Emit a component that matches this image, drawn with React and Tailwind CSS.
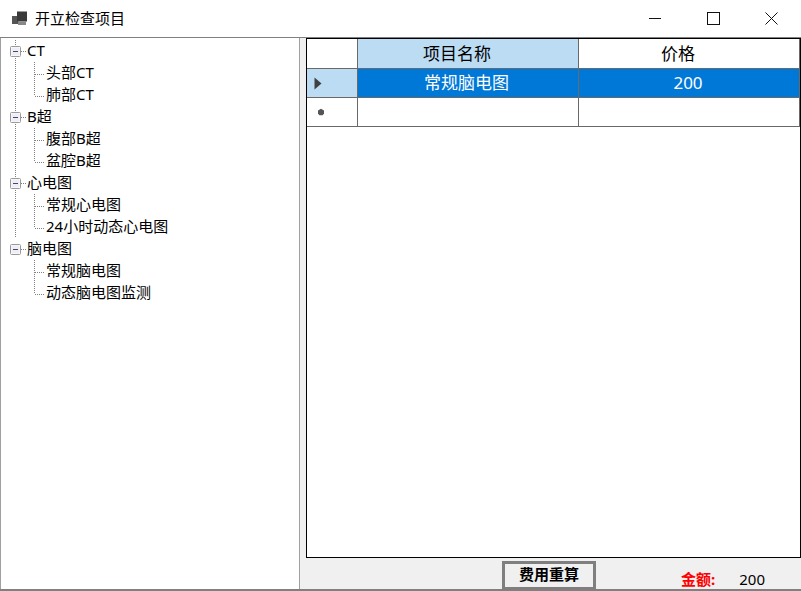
const FONT = '"Noto Sans","Noto Sans CJK SC","Liberation Sans",sans-serif';

function Gutter({ kind, trunk, childLast }) {
  const dot = { stroke: "#808080", strokeWidth: 1, strokeDasharray: "1 1", fill: "none" };
  return (
    <svg width="45" height="22" className="shrink-0" style={{ marginRight: kind === "root" ? -19 : 0 }}>
      {trunk && <path d="M14.5 0V22" {...dot} />}
      {kind === "root" ? (
        <g>
          <path d="M20 11.5H25" {...dot} />
          <rect x="9.5" y="6.5" width="10" height="10" rx="1" fill="#fff" stroke="#9a9a9a" />
          <rect x="10.5" y="7.5" width="8" height="8" fill="#eeeef3" />
          <path d="M12 11.5H17" stroke="#3b4a78" strokeWidth="1" />
        </g>
      ) : (
        <g>
          <path d={childLast ? "M33.5 0V12" : "M33.5 0V22"} {...dot} />
          <path d="M34 12.5H44" {...dot} />
        </g>
      )}
    </svg>
  );
}

function TreeRow({ kind, text, trunk, last }) {
  return (
    <div className="flex h-[22px] items-center whitespace-nowrap text-[15px] leading-[22px] text-black">
      <Gutter kind={kind} trunk={trunk} childLast={last} />
      <span className="-mt-[2px]">{text}</span>
    </div>
  );
}

const TREE = [
  ["CT", ["头部CT", "肺部CT"]],
  ["B超", ["腹部B超", "盆腔B超"]],
  ["心电图", ["常规心电图", "24小时动态心电图"]],
  ["脑电图", ["常规脑电图", "动态脑电图监测"]],
];

function Tree() {
  return (
    <div className="w-[300px] shrink-0 border-r border-r-[#a0a0a0] border-l border-l-[#a0a0a0] bg-white pt-[2px]">
      {TREE.map(([root, kids], i) => {
        const more = i < TREE.length - 1;
        return (
          <div key={root}>
            <TreeRow kind="root" text={root} trunk={more} />
            {kids.map((k, j) => (
              <TreeRow key={k} kind="child" text={k} trunk={more} last={j === kids.length - 1} />
            ))}
          </div>
        );
      })}
    </div>
  );
}

function Grid() {
  const cell = "flex items-center justify-center border-r border-b border-[#696969]";
  return (
    <div className="ml-[6px] h-[520px] w-[495px] shrink-0 border border-black bg-white">
      <div className="grid grid-cols-[51px_221px_1fr] grid-rows-[30px_29px_29px] text-[17px] text-black">
        <div className={`${cell} bg-white`} />
        <div className={`${cell} bg-[#bcdcf4] pr-[22px]`}>项目名称</div>
        <div className={`${cell} bg-white pr-[22px]`}>价格</div>

        <div className={`${cell} justify-start bg-[#bcdcf4] pl-[7px]`}>
          <svg width="8" height="13" viewBox="0 0 8 13"><path d="M0.5 0.5L7.5 6.5L0.5 12.5Z" fill="#404040" /></svg>
        </div>
        <div className={`${cell} bg-[#0078d7] pr-[3px] text-white`}>常规脑电图</div>
        <div className={`${cell} bg-[#0078d7] pr-[2px] text-white`}>200</div>

        <div className={`${cell} justify-start bg-white pl-[10px]`}>
          <svg width="8" height="8" viewBox="0 0 8 8"><path d="M4 .8L7 2.6V5.6L5.6 7.2H2.4L1 5.6V2.6Z" fill="#555" /></svg>
        </div>
        <div className={`${cell} bg-white`} />
        <div className={`${cell} bg-white`} />
      </div>
    </div>
  );
}

export default function App() {
  return (
    <div className="flex h-[591px] w-[801px] flex-col overflow-hidden bg-white" style={{ fontFamily: FONT }}>
      <div className="flex h-[38px] shrink-0 items-center border-b border-[#808080] bg-white">
        <svg width="16" height="16" viewBox="0 0 16 16" className="ml-[12px] shrink-0">
          <rect x="0" y="5" width="6.5" height="8" fill="#555" />
          <rect x="5" y="0.5" width="10" height="10" fill="#3a3a3a" />
          <rect x="6" y="10.5" width="8" height="3.5" fill="#888" />
        </svg>
        <span className="ml-[7px] -mt-px text-[15px] text-black">开立检查项目</span>
        <div className="ml-auto mr-px flex h-full items-center">
          <div className="flex w-[58px] items-center justify-center">
            <svg width="12" height="12"><path d="M0 5.5H12" stroke="#111" /></svg>
          </div>
          <div className="flex w-[58px] items-center justify-center">
            <svg width="13" height="13"><rect x="0.5" y="0.5" width="12" height="12" fill="none" stroke="#111" /></svg>
          </div>
          <div className="flex w-[58px] items-center justify-center">
            <svg width="13" height="13"><path d="M.5 .5L12.5 12.5M12.5 .5L.5 12.5" stroke="#111" /></svg>
          </div>
        </div>
      </div>
      <div className="flex min-h-0 flex-1 border-b-2 border-[#808080]">
        <Tree />
        <div className="flex min-w-0 flex-1 flex-col bg-[#f0f0f0]">
          <Grid />
          <div className="flex min-h-0 flex-1 items-start">
            <button className="ml-[202px] mt-[3px] h-[29px] w-[94px] shrink-0 border-[3px] border-[#7f7f7f] bg-[#f0f0f0] pb-[3px] text-[15px] font-bold leading-none text-black">
              费用重算
            </button>
            <span className="ml-[85px] mt-[11px] text-[15px] font-bold leading-[20px] text-[#ff0000]">金额:</span>
            <span className="ml-[24px] mt-[11px] text-[15px] leading-[20px] text-black">200</span>
          </div>
        </div>
      </div>
    </div>
  );
}
